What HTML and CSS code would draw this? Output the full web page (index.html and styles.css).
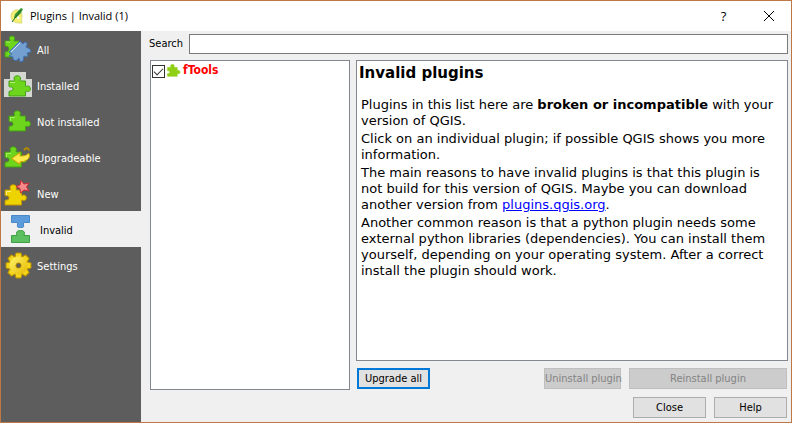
FILE: index.html
```html
<!DOCTYPE html>
<html lang="en">
<head>
<meta charset="utf-8">
<title>Plugins | Invalid (1)</title>
<link rel="stylesheet" href="styles.css">
</head>
<body>
<svg class="defs" aria-hidden="true">
  <defs>
    <linearGradient id="gold" x1="0" y1="0" x2="1" y2="1"><stop offset="0" stop-color="#fff56a"/><stop offset="1" stop-color="#e6b800"/></linearGradient>
    <path id="piece" d="M1 6H6C7 5.500 6 4.500 6 3C6.500 0 12 0 12.500 3C12.500 4.500 11.500 5.500 12.500 6H17.500V11C18.500 12 19 10.500 20.500 11C23 12 23 16 20.500 16.500C19 17 18.500 15.500 17.500 16.500V21H1V16.500C2.500 15.500 5 16.500 5 14C5 11 2.500 12.500 1 11.500Z"/>
  </defs>
</svg>
<div class="window">
  <header class="titlebar">
    <svg class="logo" viewBox="0 0 16 18"><path d="M6 3C10 2 13 5 13 9C13 11 12 13 13 16H10C6 16 2 14 2 9C2 6 4 4 6 3Z" fill="#f4ef72" stroke="#dcdc86"/><path d="M8 9L10 12" stroke="#fff" stroke-width="2"/><path d="M5 11L6 7L12 1L14 2L12 6L7 11Z" fill="#3c9a35"/><path d="M3 15L12 3" stroke="#176b25"/></svg>
    <h1>Plugins | Invalid (1)</h1>
    <button class="caption" aria-label="Help">?</button>
    <button class="caption close" aria-label="Close window"><svg width="10" height="10" viewBox="0 0 10 10"><path d="M0 0L10 10M10 0L0 10" stroke="#000"/></svg></button>
  </header>
  <div class="content">
    <nav class="sidebar">
      <a href="#all"><svg viewBox="0 0 28 28"><path d="M1 6H6Q4 1 8 1Q12 1 10 6H15V22H1V17Q5 17 5 14Q5 11 1 11Z" fill="#6dd51b" stroke="#429f16"/><path d="M2 7H6" stroke="#b3f175"/><path d="M5 17L16 6L19 9C20 6 24 7 23 10L22 12L26 14L27 17L23 18C25 21 23 23 20 21L19 26L16 27L15 23C13 27 8 26 9 22L5 21L8 19Z" fill="#729fcf" stroke="#3f70b0"/><path d="M7 17L16 8" stroke="#d5e6f7"/></svg><span>All</span></a>
      <a href="#installed"><svg viewBox="0 0 28 28"><path d="M6 1H22V8H28V26H0V8H6Z" fill="#d3d7cf"/><use href="#piece" transform="translate(4 4)" fill="#6dd51b" stroke="#429f16"/><path d="M6 11.500H11M14 7H15" stroke="#b3f175"/></svg><span>Installed</span></a>
      <a href="#not-installed"><svg viewBox="0 0 28 28"><use href="#piece" transform="translate(4 3)" fill="#6dd51b" stroke="#429f16"/><path d="M6.500 14V10.500H11" fill="none" stroke="#a5ef60"/></svg><span>Not installed</span></a>
      <a href="#upgradeable"><svg viewBox="0 0 28 28"><use href="#piece" transform="translate(0 3)" fill="#6dd51b" stroke="#429f16"/><path d="M2.500 14V10.500H7" fill="none" stroke="#a5ef60"/><path d="M7.500 15.500L16 9.500V13C21 13 23.500 12 24.500 10Q27 14 23 17Q20 19 16 19V21.500Z" fill="#fce94f" stroke="#c4a000"/><path d="M20 7Q24 3 25 7.500" fill="none" stroke="#b38b00" stroke-width="2"/></svg><span>Upgradeable</span></a>
      <a href="#new"><svg viewBox="0 0 28 28"><use href="#piece" transform="translate(0 5)" fill="#edd400" stroke="#c49600"/><path d="M2.500 16V12.500H7" fill="none" stroke="#fff38a"/><path d="M17 1.500L20 5L25 4L22.500 8L25 12L20 11L16.500 14L16 9.500L12 7.500L16 6Z" fill="#f58a8a" stroke="#cc2d35"/></svg><span>New</span></a>
      <a href="#invalid" class="active" aria-current="page"><svg viewBox="0 0 28 28"><path d="M4.500 .5H22.500V7.500H16.500V10Q17.500 13 13.500 12.500Q9.500 13 10.500 10V7.500H4.500Z" fill="#5c9bdc" stroke="#4a88c8"/><path d="M4.500 27.500V20.500H10Q8 15.500 13.500 15.500Q19 15.500 17 20.500H22.500V27.500Z" fill="#5cbf60" stroke="#3e9e43"/></svg><span>Invalid</span></a>
      <a href="#settings"><svg viewBox="0 0 28 28"><g transform="translate(14.500 14.500)"><g fill="#f2d51b" stroke="#b89000"><path id="tooth" d="M-4 -7L-2.500 -12.500H2.500L4 -7Z"/><use href="#tooth" transform="rotate(45)"/><use href="#tooth" transform="rotate(90)"/><use href="#tooth" transform="rotate(135)"/><use href="#tooth" transform="rotate(180)"/><use href="#tooth" transform="rotate(225)"/><use href="#tooth" transform="rotate(270)"/><use href="#tooth" transform="rotate(315)"/></g><circle r="9" fill="url(#gold)"/><circle r="2.500" fill="#5d5d5d" stroke="#a88000"/></g></svg><span>Settings</span></a>
    </nav>
    <main>
      <div class="search"><label for="search">Search</label><input id="search" type="text"></div>
      <div class="panels">
        <section class="list">
          <label class="plugin"><input type="checkbox" checked><svg viewBox="0 0 24 24"><use href="#piece" fill="#8fd014" stroke="#8fd014"/></svg>fTools</label>
        </section>
        <div class="details">
          <article>
            <h2>Invalid plugins</h2>
            <p>Plugins in this list here are <b>broken or incompatible</b> with your version of QGIS.</p>
            <p>Click on an individual plugin; if possible QGIS shows you more information.</p>
            <p>The main reasons to have invalid plugins is that this plugin is not build for this version of QGIS. Maybe you can download another version from <a href="#plugins">plugins.qgis.org</a>.</p>
            <p>Another common reason is that a python plugin needs some external python libraries (dependencies). You can install them yourself, depending on your operating system. After a correct install the plugin should work.</p>
          </article>
          <div class="actions"><button class="primary">Upgrade all</button><button class="uninstall" disabled>Uninstall plugin</button><button class="reinstall" disabled>Reinstall plugin</button></div>
        </div>
      </div>
      <footer><button>Close</button><button>Help</button></footer>
    </main>
  </div>
</div>
</body>
</html>
```
FILE: styles.css
```css
* { box-sizing: border-box; }
body { margin: 0; font: 11px/16px "DejaVu Sans Condensed", "DejaVu Sans", sans-serif; color: #000; }
.defs { position: absolute; width: 0; height: 0; }
.window { min-height: 100vh; display: flex; flex-direction: column; border: 1px solid #bd7846; background: #f0f0f0; }
.titlebar { height: 30px; display: flex; align-items: center; background: #fff; padding-left: 8px; }
.logo { width: 16px; height: 18px; }
h1 { flex: 1; margin: 0 0 0 5px; font: 11px/16px "Open Sans", sans-serif; }
.caption { width: 45px; height: 30px; min-width: 0; padding: 0; border: 0; background: none; font: 13px/16px "Open Sans", sans-serif; }
.content { flex: 1; display: flex; }
.sidebar { width: 140px; flex: none; background: #5d5d5d; }
.sidebar a { height: 36px; display: flex; align-items: center; gap: 5px; padding-left: 3px; color: #fff; text-decoration: none; }
.sidebar span { padding-top: 3px; }
.sidebar svg { width: 28px; height: 28px; }
.sidebar .active { background: #f0f0f0; color: #000; padding-left: 6px; }
main { flex: 1; min-width: 0; display: flex; flex-direction: column; padding: 3px 3px 4px 8px; }
.search { display: flex; align-items: center; gap: 6px; }
.search input { flex: 1; min-width: 0; height: 20px; border: 1px solid #7a7a7a; background: #fff; padding: 0 4px; font: inherit; }
.panels { flex: 1; display: flex; gap: 6px; margin: 6px 0 7px 1px; }
.list { width: 200px; flex: none; border: 1px solid #828790; background: #fff; padding: 1px; }
.plugin { display: flex; align-items: center; color: #f00; font-size: 12px; font-weight: bold; height: 16px; }
.plugin svg { width: 14px; height: 14px; margin: 2px 2px 0; }
.plugin input { appearance: none; width: 13px; height: 13px; margin: 2px 0 0; border: 1px solid #333; background: #fff; display: grid; place-items: center; }
.plugin input:checked::after { content: ""; width: 8px; height: 4px; border: solid #333; border-width: 0 0 1px 1px; transform: translateY(-1px) rotate(-45deg); }
.details { flex: 1; min-width: 0; display: flex; flex-direction: column; }
article { flex: 1; border: 1px solid #828790; background: #fff; padding: 3px 8px 4px 4px; font: 13px/16px "DejaVu Sans", sans-serif; }
h2 { margin: 0 0 15px -2px; font: bold 15px/18px "DejaVu Sans", sans-serif; }
p { margin: 0 0 2px; }
article a { color: #00f; }
.actions { display: flex; margin: 7px 1px 1px; }
button { height: 21px; width: 73px; padding: 0; border: 1px solid #adadad; background: #e1e1e1; color: #000; font: inherit; white-space: nowrap; }
.primary { border: 2px solid #0078d7; margin-right: auto; }
button:disabled { background: #ccc; border-color: #bfbfbf; color: #838383; }
.uninstall { width: 77px; margin-right: 8px; }
.reinstall { width: 158px; }
footer { display: flex; justify-content: flex-end; gap: 8px; padding-right: 1px; }
```
